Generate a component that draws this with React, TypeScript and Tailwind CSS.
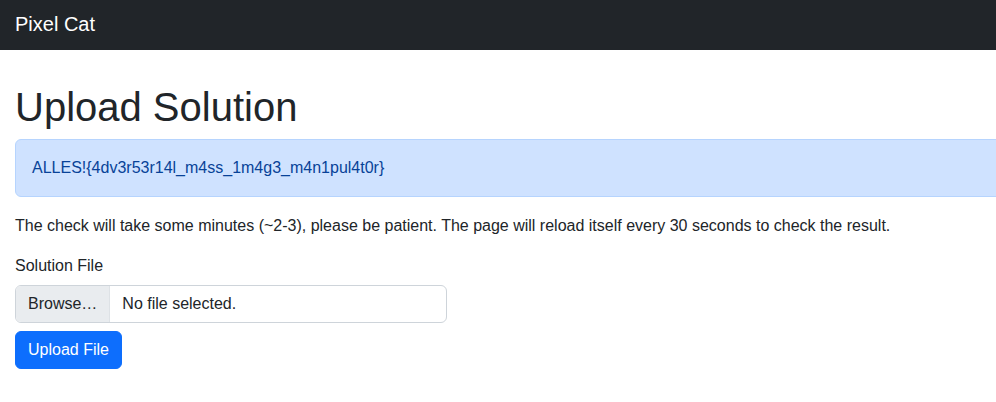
export default function App() {
  return (
    <div className="min-h-[402px] w-full overflow-hidden bg-white text-[#212529] font-['Liberation_Sans',Arial,sans-serif] text-base leading-6">
      {/* Navbar */}
      <nav className="h-[50px] bg-[#212529] flex items-center px-[15px]">
        <span className="text-white text-[20px] leading-[30px] -mt-[3px]">Pixel Cat</span>
      </nav>

      {/* Content */}
      <div className="w-[1140px] pl-[15px] pr-[15px]">
        <h1 className="mt-[33px] mb-2 text-[40px] leading-[48px] font-medium">Upload Solution</h1>

        <div className="mb-4 rounded-[6px] border border-[#b6d4fe] bg-[#cfe2ff] text-[#084298] px-4 py-4">
          ALLES!{"{"}4dv3r53r14l_m4ss_1m4g3_m4n1pul4t0r{"}"}
        </div>

        <p className="pt-[1px] mb-[15px]">
          The check will take some minutes (~2-3), please be patient. The page will reload itself every 30 seconds to check the result.
        </p>

        <label className="block pt-[1px] mb-[7px]">Solution File</label>
        <div className="flex w-[432px] h-[38px] rounded-[6px] border border-[#ced4da] overflow-hidden">
          <span className="flex items-center px-3 bg-[#e9ecef] border-r border-[#dee2e6]">Browse…</span>
          <span className="flex items-center px-3">No file selected.</span>
        </div>

        <button className="mt-2 h-[38px] px-3 rounded-[6px] border border-[#0d6efd] bg-[#0d6efd] text-white">Upload File</button>
      </div>
    </div>
  );
}
